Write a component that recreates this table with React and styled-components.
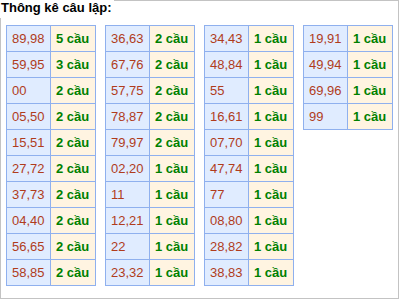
import React from "react";
import styled, { createGlobalStyle } from "styled-components";

const GlobalStyle = createGlobalStyle`
  body {
    margin: 0;
    background: #fff;
    font-family: "Liberation Sans", Arial, sans-serif;
  }
`;

const Box = styled.div`
  width: 399px;
  height: 299px;
  box-sizing: border-box;
  border: 1px solid #c3c3c3;
  background: #fff;
`;

const Title = styled.div`
  width: fit-content;
  margin: -1px 0 0 -1px;
  padding: 0 2px 0 1px;
  height: 18px;
  line-height: 15px;
  background: #fff;
  color: #000;
  font-size: 13px;
  font-weight: bold;
`;

const Tables = styled.div`
  display: flex;
  align-items: flex-start;
  gap: 9px;
  margin: 7px 0 0 5px;
`;

const Table = styled.table`
  width: 90px;
  table-layout: fixed;
  border-collapse: collapse;
  border: 1px solid #8fb0ee;
`;

const PairCol = styled.col`
  width: 44px;
`;

const Cell = styled.td`
  height: 25px;
  padding: 0 4px 0 5px;
  border: 1px solid #8fb0ee;
  font-size: 13px;
  white-space: nowrap;
  overflow: hidden;
  background: ${(p) => (p.$count ? "#fff4e1" : "#e0ecff")};
  color: ${(p) => (p.$count ? "#008000" : "#b03c1c")};
  font-weight: ${(p) => (p.$count ? "bold" : "normal")};
`;

const columns = [
  [
    ["89,98", 5], ["59,95", 3], ["00", 2], ["05,50", 2], ["15,51", 2],
    ["27,72", 2], ["37,73", 2], ["04,40", 2], ["56,65", 2], ["58,85", 2],
  ],
  [
    ["36,63", 2], ["67,76", 2], ["57,75", 2], ["78,87", 2], ["79,97", 2],
    ["02,20", 1], ["11", 1], ["12,21", 1], ["22", 1], ["23,32", 1],
  ],
  [
    ["34,43", 1], ["48,84", 1], ["55", 1], ["16,61", 1], ["07,70", 1],
    ["47,74", 1], ["77", 1], ["08,80", 1], ["28,82", 1], ["38,83", 1],
  ],
  [
    ["19,91", 1], ["49,94", 1], ["69,96", 1], ["99", 1],
  ],
];

export default function App() {
  return (
    <>
      <GlobalStyle />
      <Box>
        <Title>Thông kê câu lập:</Title>
        <Tables>
          {columns.map((rows, i) => (
            <Table key={i}>
              <colgroup>
                <PairCol />
                <col />
              </colgroup>
              <tbody>
                {rows.map(([pair, n]) => (
                  <tr key={pair}>
                    <Cell>{pair}</Cell>
                    <Cell $count>{n} cầu</Cell>
                  </tr>
                ))}
              </tbody>
            </Table>
          ))}
        </Tables>
      </Box>
    </>
  );
}
